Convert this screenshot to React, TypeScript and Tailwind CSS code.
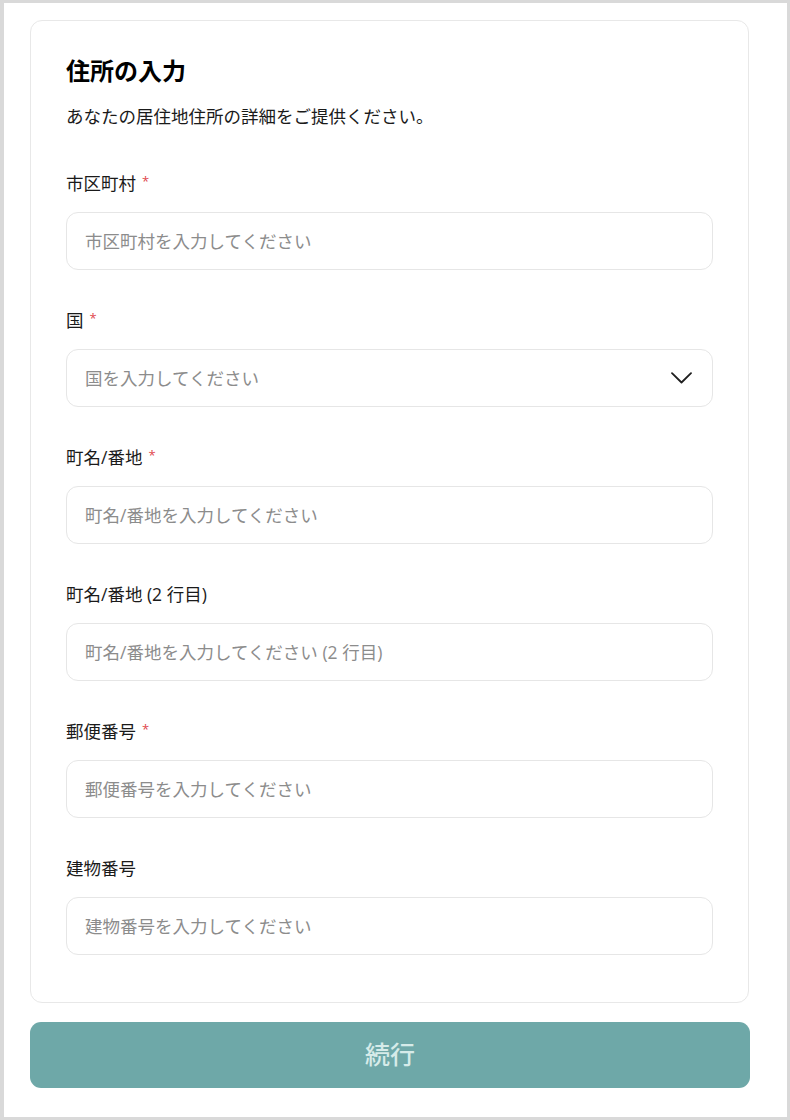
import React from "react";

const font = { fontFamily: '"Open Sans", "Noto Sans CJK JP", sans-serif' };

function Label({ text, required }: { text: string; required?: boolean }) {
  return (
    <div className="flex items-start h-6 text-[17.5px] leading-6 text-[#1a1a1a]">
      <span>{text}</span>
      {required && <span className="ml-[6px] text-[13px] leading-5 text-[#e0474c]">*</span>}
    </div>
  );
}

function Field({ label, placeholder, required, select }: { label: string; placeholder: string; required?: boolean; select?: boolean }) {
  return (
    <div className="flex flex-col">
      <Label text={label} required={required} />
      <div className="mt-[17px] h-[58px] rounded-[12px] border border-[#e6e6e6] bg-white flex items-center pl-[18px] pr-5 justify-between">
        <span className="text-[17.5px] text-[#8c8c8c]">{placeholder}</span>
        {select && (
          <svg width="21" height="12" viewBox="0 0 21 12" fill="none">
            <path d="M1 1.2L10.5 10.5L20 1.2" stroke="#1f1f1f" strokeWidth="1.8" strokeLinecap="round" strokeLinejoin="round" />
          </svg>
        )}
      </div>
    </div>
  );
}

export default function App() {
  return (
    <div className="w-[790px] h-[1120px] bg-[#d9d9d9] pt-[3px] pl-[4px] pr-[3px] pb-[3px]" style={font}>
      <div className="h-full bg-white pt-[17px] pl-[26px] pr-[35px]">
        <div className="w-[719px] rounded-[12px] border border-[#e8e8e8] bg-white pl-[35px] pr-[35px] pt-[34px] pb-[47px]">
          <h1 className="text-[24px] leading-8 font-bold text-black">住所の入力</h1>
          <p className="mt-[17px] text-[17.5px] leading-6 text-[#1a1a1a]">あなたの居住地住所の詳細をご提供ください。</p>
          <div className="mt-[43px] flex flex-col gap-[38px]">
            <Field label="市区町村" placeholder="市区町村を入力してください" required />
            <Field label="国" placeholder="国を入力してください" required select />
            <Field label="町名/番地" placeholder="町名/番地を入力してください" required />
            <Field label="町名/番地 (2 行目)" placeholder="町名/番地を入力してください (2 行目)" />
            <Field label="郵便番号" placeholder="郵便番号を入力してください" required />
            <Field label="建物番号" placeholder="建物番号を入力してください" />
          </div>
        </div>
        <button className="mt-[19px] w-[720px] h-[66px] rounded-[11px] bg-[#6ea8a8] text-[#d6ebe9] text-[25px] font-medium flex items-center justify-center">
          続行
        </button>
      </div>
    </div>
  );
}
